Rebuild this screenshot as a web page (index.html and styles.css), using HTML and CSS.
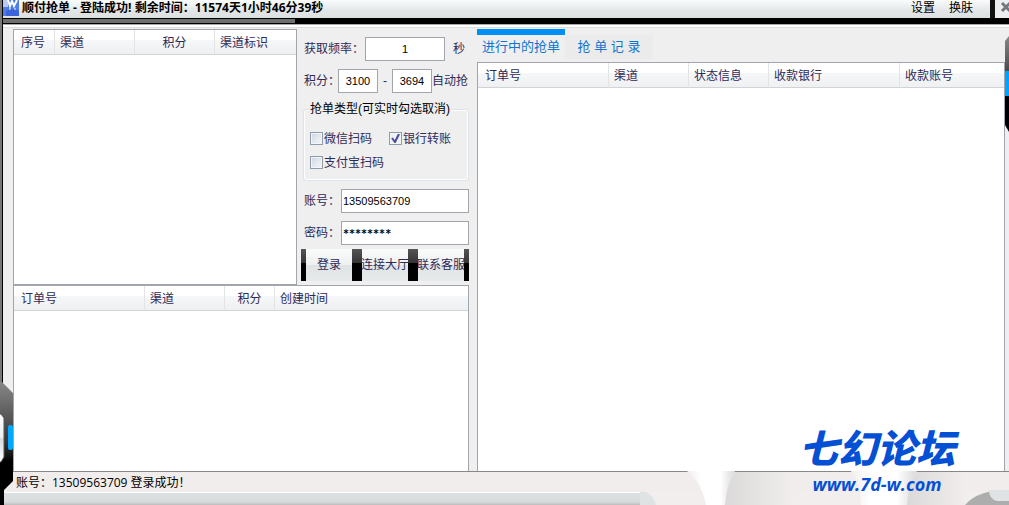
FILE: index.html
```
<!DOCTYPE html>
<html lang="zh-CN">
<head>
    <meta charset="UTF-8">
    <meta name="viewport" content="width=device-width, initial-scale=1.0">
    <title>顺付抢单</title>
    <link rel="stylesheet" href="styles.css">
</head>
<body>
<header class="titlebar">
    <svg class="app-icon" width="17" height="16" viewBox="0 0 17 16">
        <rect width="16" height="16" fill="#4c7de8"/>
        <path d="M0 0h5v7H0z" fill="#b9c8f4"/>
        <path d="M5 0l2 6 2-5 2 5 3-6" fill="none" stroke="#fff" stroke-width="2"/>
        <path d="M3 11q6-5 13 0v5H3z" fill="#3a63dc"/>
        <path d="M6 9h2M11 9h2" stroke="#fff"/>
    </svg>
    <h1>顺付抢单 - 登陆成功! 剩余时间：11574天1小时46分39秒</h1>
    <nav>
        <a href="#">设置</a>
        <a href="#">换肤</a>
    </nav>
    <button class="close" aria-label="关闭">
        <svg width="14" height="18" viewBox="0 0 14 18"><path d="M7 3l8 8M15 3l-8 8" stroke="#73777f" stroke-width="3"/></svg>
    </button>
</header>
<div class="strip"><div class="strip-fill"></div></div>

<main>
    <div class="left">
        <section class="channels panel">
            <table>
                <colgroup><col class="w40"><col class="w80"><col class="w80"><col></colgroup>
                <thead><tr><th>序号</th><th>渠道</th><th class="center">积分</th><th>渠道标识</th></tr></thead>
            </table>
        </section>
        <form class="settings">
            <div class="row">
                <label for="rate">获取频率：</label>
                <input class="rate" type="text" id="rate" value="1">
                <span class="unit">秒</span>
            </div>
            <div class="row">
                <label class="short" for="min">积分：</label>
                <input class="points" type="text" id="min" value="3100">
                <span class="dash">-</span>
                <input class="points" type="text" id="max" aria-label="积分上限" value="3694">
                <span>自动抢</span>
            </div>
            <fieldset>
                <legend>抢单类型(可实时勾选取消)</legend>
                <label><input type="checkbox">微信扫码</label>
                <label><input type="checkbox" checked>银行转账</label>
                <label><input type="checkbox">支付宝扫码</label>
            </fieldset>
            <div class="row">
                <label class="account" for="user">账号：</label>
                <input class="wide" type="text" id="user" value="13509563709">
            </div>
            <div class="row">
                <label class="account" for="pass">密码：</label>
                <input class="wide masked" type="text" id="pass" value="********">
            </div>
            <div class="buttons">
                <button type="button">登录</button>
                <button type="button">连接大厅</button>
                <button type="button">联系客服</button>
            </div>
        </form>
        <section class="created panel">
            <table>
                <colgroup><col class="w130"><col class="w80"><col class="w50"><col></colgroup>
                <thead><tr><th>订单号</th><th>渠道</th><th class="center">积分</th><th>创建时间</th></tr></thead>
            </table>
        </section>
    </div>
    <div class="right">
        <div class="tabs">
            <button class="tab active">进行中的抢单</button>
            <button class="tab">抢 单 记 录</button>
        </div>
        <section class="orders panel">
            <table>
                <colgroup><col class="w130"><col class="w80"><col class="w80"><col class="w130"><col></colgroup>
                <thead><tr><th>订单号</th><th>渠道</th><th>状态信息</th><th>收款银行</th><th>收款账号</th></tr></thead>
            </table>
        </section>
    </div>
</main>

<footer class="status">账号：13509563709 登录成功！</footer>
<div class="bottom"></div>

<!-- skin decorations along the window edges -->
<svg class="skin-left" width="14" height="135" viewBox="0 0 14 135">
    <defs>
        <linearGradient id="dark" x1="0" y1="0" x2="0" y2="1"><stop offset="0" stop-color="#888"/><stop offset=".5" stop-color="#333"/><stop offset=".65" stop-color="#000"/></linearGradient>
        <linearGradient id="pod" x1="0" y1="0" x2="0" y2="1"><stop offset="0" stop-color="#fff"/><stop offset=".5" stop-color="#eceeef"/><stop offset=".5" stop-color="#d5dadd"/><stop offset="1" stop-color="#fff"/></linearGradient>
    </defs>
    <path d="M0 12h2l11 11v88l-9 9v15H0z" fill="url(#dark)"/>
    <path d="M-1 44h2l3 4v39l-3 5h-2z" fill="url(#pod)" stroke="#555"/>
    <rect x="8" y="55" width="5" height="25" rx="2" fill="#00a8ff"/>
</svg>
<svg class="skin-right" width="4" height="96" viewBox="0 0 4 96">
    <path d="M4 0L0 5v84l4 7z" fill="url(#dark)"/>
    <rect y="35" width="4" height="25" fill="#00a2ff"/>
</svg>
<svg class="skin-bottom" width="369" height="36" viewBox="0 0 369 36">
    <defs>
        <linearGradient id="fade"><stop offset="0" stop-color="#f2eeee"/><stop offset=".3" stop-color="#fff"/><stop offset=".7" stop-color="#fff"/><stop offset="1" stop-color="#dad8d8"/></linearGradient>
        <linearGradient id="shade"><stop offset="0" stop-color="#dad8d8"/><stop offset="1" stop-color="#f2eeee"/></linearGradient>
    </defs>
    <path d="M6 23h363v13H14q-2-9-8-13z" fill="#f2eeee"/>
    <path d="M0 23h6q8 4 10 13H0z" fill="#dfe3e3"/>
    <path d="M95 3h60v33H83q2-20 12-33z" fill="url(#shade)"/>
    <path d="M47 2h48q-8 12-10 34H66Q62 14 47 2z" fill="url(#fade)"/>
    <path d="M277 3h50v33h-62q2-20 12-33z" fill="url(#shade)"/>
    <path d="M211 2h66q-8 12-10 34h-46q0-20-10-34z" fill="url(#fade)"/>
    <path d="M325 36q12-15 44-15v15z" fill="#adadad"/>
    <path d="M349 21h20v11h-12q-8-2-8-11z" fill="#dfe3e3"/>
</svg>
<div class="watermark">
    <strong>七幻论坛</strong>
    <span>www.7d-w.com</span>
</div>
</body>
</html>
```

FILE: styles.css
```
* {
    box-sizing: border-box;
}
body {
    margin: 0;
    min-height: 100vh;
    display: flex;
    flex-direction: column;
    position: relative;
    overflow: hidden;
    padding-left: 3px;
    background: linear-gradient(to right, #777 2px, #000 2px 3px, #efefef 3px);
    font-family: "Liberation Sans", "Noto Sans CJK SC", sans-serif;
    font-size: 12px;
    line-height: 16px;
    color: #2e2a58;
}
button, input {
    font: inherit;
    color: inherit;
}

/* title bar */
.titlebar {
    display: flex;
    height: 18px;
    color: #000;
    background: linear-gradient(#fafcfc, #e2e6e6 60%, #dde0e0);
    font-family: "Open Sans", "Noto Sans CJK SC", sans-serif;
}
.titlebar h1 {
    margin: 0 auto 0 2px;
    font-size: 12px;
    line-height: 16px;
}
.titlebar nav {
    display: flex;
    gap: 14px;
    padding-right: 17px;
}
.titlebar a {
    color: #000;
    text-decoration: none;
}
.close {
    width: 19px;
    padding: 0;
    border: 0;
    border-left: 5px solid #111;
    background: #eceeef;
}
.strip {
    height: 6px;
    padding: 1px 0;
    background: #000;
}
.strip-fill {
    width: 292px;
    height: 4px;
    background: #6e6e6e;
}

/* panels */
main {
    flex: 1;
    display: flex;
    gap: 8px;
    padding: 4px 4px 0 10px;
    border-top: 1px solid #aaa;
    box-shadow: inset 0 2px #fff, inset 0 3px #ddd;
}
.left {
    display: grid;
    grid-template-columns: 284px 172px;
    grid-template-rows: 256px 1fr;
}
.right {
    flex: 1;
    display: flex;
    flex-direction: column;
}
.panel {
    background: #fff;
    border: 1px solid #a0a6ac;
    border-bottom: 0;
}
.channels {
    border-bottom: 1px solid #a0a6ac;
}
.created {
    grid-column: 1 / 3;
}
.orders {
    flex: 1;
}
table {
    width: 100%;
    table-layout: fixed;
    border-spacing: 0;
}
th {
    height: 25px;
    padding: 2px 0 0 5px;
    font-weight: normal;
    text-align: left;
    border-right: 1px solid #e2e3e5;
    border-bottom: 1px solid #d2d3d5;
    background: linear-gradient(#fff 40%, #f6f7f8 40%, #eff0f2);
}
th:first-child {
    padding-left: 7px;
}
th:last-child {
    border-right: 0;
}
th.center {
    padding-left: 0;
    text-align: center;
}
.w40 { width: 41px; }
.w50 { width: 50px; }
.w80 { width: 80px; }
.w130 { width: 131px; }

/* settings form */
.settings {
    padding: 8px 0 0 4px;
}
.row {
    display: flex;
    align-items: center;
    height: 24px;
    margin: 0 0 8px 3px;
    white-space: nowrap;
}
.row label {
    width: 61px;
}
.row label.short {
    width: 34px;
}
.row label.account {
    width: 37px;
}
.row input {
    height: 24px;
    padding: 0 1px;
    border: 1px solid #a0a6ac;
    background: #fff;
    color: #000;
    font-size: 11px;
}
.row .rate {
    width: 80px;
    text-align: center;
}
.row .points {
    width: 40px;
    text-align: center;
}
.row .wide {
    width: 128px;
}
.row .masked {
    font-family: "DejaVu Sans Mono", monospace;
    font-size: 10px;
    font-weight: bold;
}
.unit {
    padding-left: 8px;
}
.dash {
    width: 14px;
    text-align: center;
}
fieldset {
    display: flex;
    flex-wrap: wrap;
    align-content: flex-start;
    column-gap: 17px;
    row-gap: 8px;
    height: 80px;
    margin: 0 0 8px 2px;
    padding: 14px 0 0 6px;
    border: 1px solid #dce3ea;
    border-radius: 3px;
    box-shadow: inset 0 0 0 1px #fff;
}
legend {
    padding: 0 1px;
    margin-left: -1px;
    background: #efefef;
    color: #000;
}
fieldset label {
    display: flex;
    gap: 1px;
}
fieldset input {
    appearance: none;
    width: 13px;
    height: 13px;
    margin: 1px 0 0;
    border: 1px solid #8e9cab;
    background: linear-gradient(135deg, #ccd6e0, #f6f8fa);
    box-shadow: inset 0 0 0 1px #f4f4f4;
}
fieldset input:checked {
    background: url("data:image/svg+xml,%3Csvg xmlns='http://www.w3.org/2000/svg' viewBox='0 0 11 11'%3E%3Cpath d='M2 5l3 4 4-8' fill='none' stroke='%234a4a98' stroke-width='2'/%3E%3C/svg%3E") #eef1f5;
}
.buttons {
    display: flex;
    margin-top: -4px;
}
.buttons button {
    flex: 1;
    height: 32px;
    padding: 0;
    display: flex;
    justify-content: center;
    align-items: center;
    white-space: nowrap;
    border: 0;
    background:
        linear-gradient(#555, #333 45%, #000 45%) left / 5px 100% no-repeat,
        linear-gradient(#555, #333 45%, #000 45%) right / 5px 100% no-repeat,
        linear-gradient(#fafbfb, #eef0f0 50%, #dfe3e4 50%, #e8eaea);
}

/* tabs */
.tabs {
    display: flex;
    align-items: flex-end;
    height: 33px;
    padding-bottom: 3px;
}
.tab {
    width: 88px;
    height: 24px;
    padding: 0;
    border: 0;
    background: #ebebeb;
    color: #0f75cf;
    font-size: 13px;
}
.tab.active {
    height: 30px;
    border-top: 6px solid #0090f5;
    background: none;
}

/* bottom */
.status {
    height: 21px;
    padding: 3px 13px;
    background: #f1eded;
    border-top: 1px solid #888;
    color: #000;
    font-family: "Open Sans", "Noto Sans CJK SC", sans-serif;
}
.bottom {
    height: 13px;
    background: linear-gradient(#fff 1px, #dce0e0 1px, #d9dcdc 10px, #bbb);
}
.skin-left {
    position: absolute;
    left: 0;
    bottom: 0;
}
.skin-right {
    position: absolute;
    right: 0;
    top: 36px;
}
.skin-bottom {
    position: absolute;
    right: 0;
    bottom: 0;
}
.watermark {
    position: absolute;
    right: 54px;
    bottom: 9px;
    display: flex;
    flex-direction: column;
    align-items: center;
    color: #0450d4;
    font-family: "Open Sans", "Noto Sans CJK SC", sans-serif;
    font-style: italic;
    font-weight: bold;
}
.watermark strong {
    font-size: 39px;
    line-height: 48px;
}
.watermark span {
    font-size: 18px;
    line-height: 24px;
}
```
